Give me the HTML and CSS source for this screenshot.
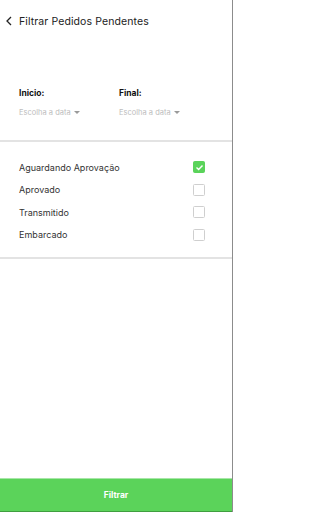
FILE: index.html
```html
<!DOCTYPE html>
<html lang="pt">
<head>
<meta charset="utf-8">
<link rel="stylesheet" href="styles.css">
</head>
<body>
<div class="app">
  <header class="header">
    <svg class="back" width="8" height="10" viewBox="0 0 8 10"><path d="M6 1 L2 5 L6 9" fill="none" stroke="#222" stroke-width="1.3"/></svg>
    <span class="title">Filtrar Pedidos Pendentes</span>
  </header>
  <section class="dates">
    <div class="date">
      <div class="label">Inicio:</div>
      <div class="pick">Escolha a data <span class="caret"></span></div>
    </div>
    <div class="date">
      <div class="label">Final:</div>
      <div class="pick">Escolha a data <span class="caret"></span></div>
    </div>
  </section>
  <section class="list">
    <div class="row"><span>Aguardando Aprovação</span><span class="box checked"><svg width="9" height="9" viewBox="0 0 9 9"><path d="M1.5 4.6 L3.6 6.6 L7.5 2.4" fill="none" stroke="#fff" stroke-width="1.4"/></svg></span></div>
    <div class="row"><span>Aprovado</span><span class="box"></span></div>
    <div class="row"><span>Transmitido</span><span class="box"></span></div>
    <div class="row"><span>Embarcado</span><span class="box"></span></div>
  </section>
  <div class="spacer"></div>
  <button class="submit">Filtrar</button>
</div>
</body>
</html>
```
FILE: styles.css
```css
html, body { margin: 0; padding: 0; background: #fff; }
body { font-family: Inter, Roboto, "Liberation Sans", sans-serif; color: #222; }
.app {
  width: 233px; height: 512px; box-sizing: border-box;
  border-right: 1px solid #8c8c8c;
  display: flex; flex-direction: column;
}
.header { display: flex; align-items: center; height: 20px; margin-top: 11px; padding-left: 5px; }
.back { margin-right: 6px; }
.title { font-size: 10.5px; color: #222; letter-spacing: 0.1px; }
.dates { display: flex; padding: 56px 0 0 19px; height: 53px; box-sizing: content-box; border-bottom: 2px solid #e3e3e3; }
.date { width: 100px; }
.label { font-size: 8.5px; font-weight: 700; color: #111; height: 12px; line-height: 12px; }
.pick { font-size: 7.5px; color: #bdbdbd; margin-top: 9px; display: flex; align-items: center; }
.caret { display: inline-block; width: 0; height: 0; border-left: 3px solid transparent; border-right: 3px solid transparent; border-top: 3.5px solid #9a9a9a; margin-left: 3px; }
.list { padding: 14px 27px 11px 19px; border-bottom: 2px solid #e3e3e3; }
.row { display: flex; justify-content: space-between; align-items: center; height: 22.5px; font-size: 9px; color: #333; }
.box { width: 10px; height: 10px; border: 1px solid #cfcfcf; border-radius: 1.5px; display: flex; align-items: center; justify-content: center; }
.box.checked { background: #5ad35a; border-color: #5ad35a; }
.spacer { flex: 1; }
.submit {
  height: 34px; border: none; border-top: 1px solid #a7e6a7; border-bottom: 1px solid #3f9e3f;
  background: #5bd35a; color: #fff; font-family: Inter, Roboto, sans-serif; font-size: 8.5px; font-weight: 700; padding: 0;
}
```
